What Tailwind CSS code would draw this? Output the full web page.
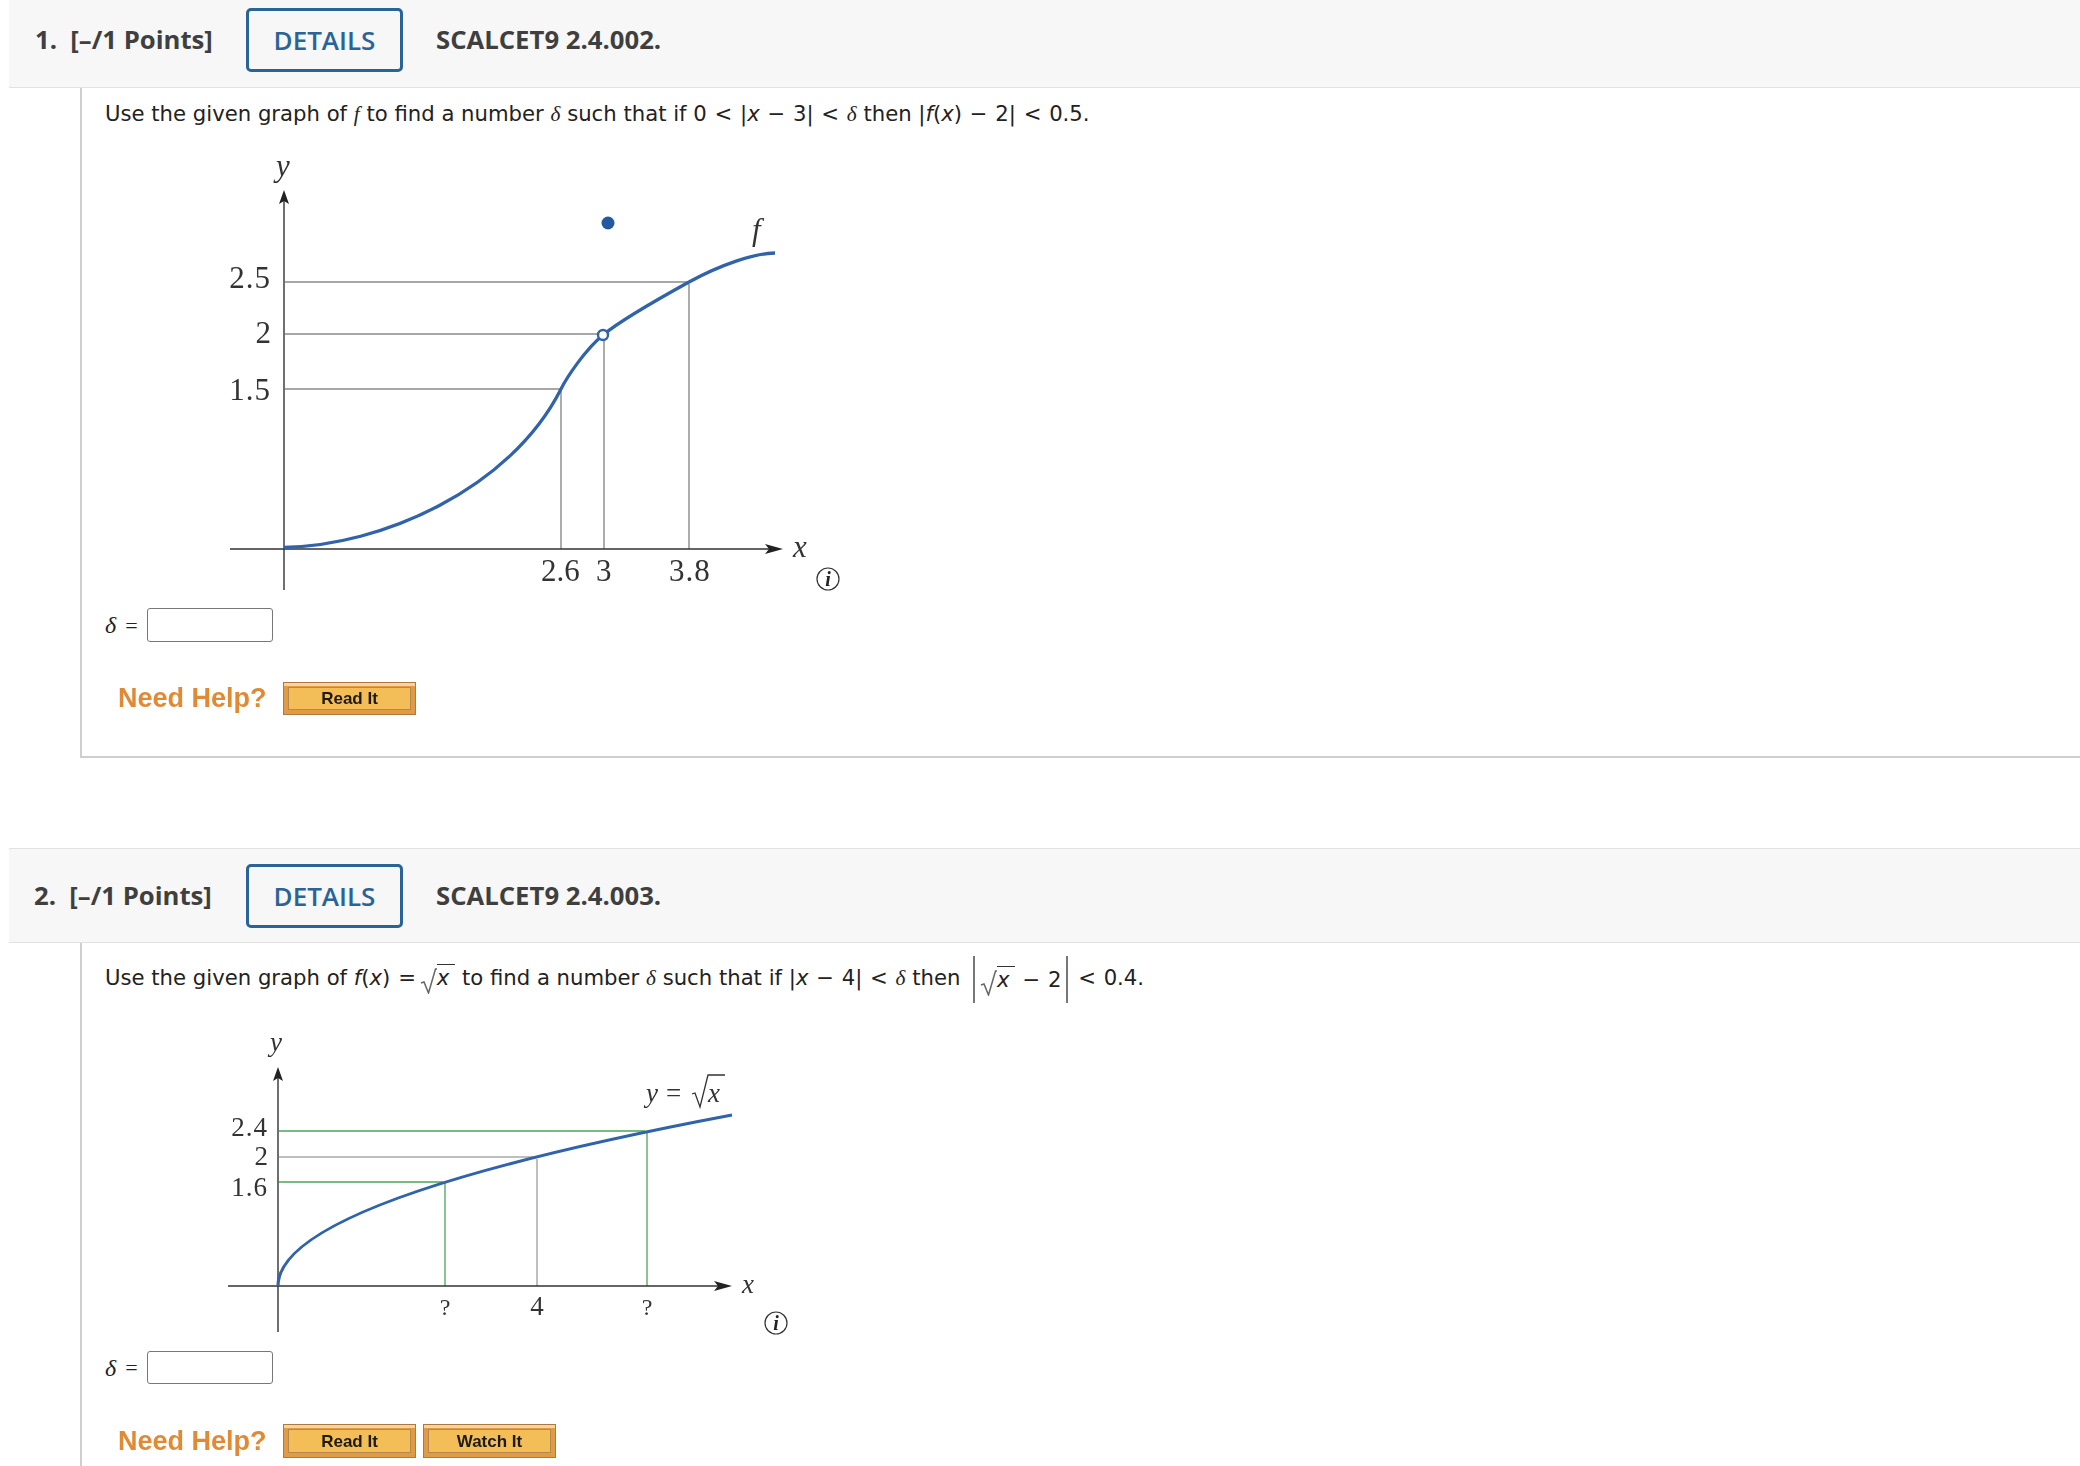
<!DOCTYPE html>
<html lang="en">
<head>
  <meta charset="UTF-8" />
  <title>SCALCET9 2.4</title>
  <script src="https://cdn.jsdelivr.net/npm/@tailwindcss/browser@4"></script>
</head>
<body class="h-[1466px] overflow-hidden bg-white font-['Open_Sans',sans-serif] text-[#222]">

  <!-- question 1 -->
  <div class="ml-[9px] flex h-[88px] items-center border-b border-[#e2e2e2] bg-[#f7f7f7] pb-[7px] text-[25.700px] font-bold text-[#3f3f3f]">
    <span class="ml-[26px] w-[211px] whitespace-pre">1.  [–/1 Points]</span>
    <span class="flex h-[64px] w-[157px] items-center justify-center rounded-[5px] border-[3px] border-[#2a6496] text-[26px] font-semibold text-[#2a6496]">DETAILS</span>
    <span class="ml-[33px]">SCALCET9 2.4.002.</span>
  </div>
  <div class="ml-[80px] h-[670px] border-b-2 border-l-2 border-[#cfcfcf]">
    <p class="h-[52px] pl-[23px] font-['DejaVu_Sans',sans-serif] text-[21.200px] leading-[52px] whitespace-pre">Use the given graph of <i class="font-['Liberation_Serif',serif]">f</i> to find a number <i class="font-['Liberation_Serif',serif]">δ</i> such that if 0 <span class="mx-[1px]">&lt;</span> |<i>x</i> <span class="mx-[1px]">−</span> 3| <span class="mx-[1px]">&lt;</span> <i class="font-['Liberation_Serif',serif]">δ</i> then |<i>f</i>(<i>x</i>) <span class="mx-[1px]">−</span> 2| <span class="mx-[1px]">&lt;</span> 0.5.</p>
    <svg class="ml-[118px] block h-[460px] w-[660px] blur-[0.4px]" viewBox="200 140 660 460" fill="none" font-family="Liberation Serif, serif" font-size="31">
      <g stroke="#8a8a8a" stroke-width="1.4">
        <path d="M285 282H688M285 334H600M285 389H560M561 391V549M604 340V549M689 284V549" />
      </g>
      <g stroke="#333" stroke-width="1.4">
        <path d="M284 195V590M230 549H775" />
      </g>
      <path d="M284 190l-5 14 5-3 5 3zM783 549l-18-5 4 5-4 5z" fill="#222" />
      <path d="M284 547.300C380 546 510 490 561 389C567 377 585 350 603 335C618 322.500 660 298 689 282C720 265 755 253 775 253" stroke="#3063a9" stroke-width="3.300" />
      <circle cx="608" cy="223" r="6.500" fill="#23599f" />
      <circle cx="603" cy="335" r="5" fill="#fff" stroke="#3063a9" stroke-width="2.400" />
      <g fill="#333">
        <text x="271" y="288" text-anchor="end" letter-spacing="1">2.5</text>
        <text x="271" y="343" text-anchor="end">2</text>
        <text x="271" y="400" text-anchor="end" letter-spacing="1">1.5</text>
        <text x="541" y="581">2.6</text>
        <text x="596" y="581">3</text>
        <text x="669" y="581" letter-spacing="1">3.8</text>
        <text x="276" y="176" font-style="italic">y</text>
        <text x="752" y="240" font-style="italic">f</text>
        <text x="793" y="557" font-style="italic">x</text>
      </g>
      <circle cx="828" cy="579" r="11" stroke="#333" stroke-width="1.200" />
      <text x="828" y="586" text-anchor="middle" font-size="20" font-weight="700" font-style="italic" fill="#222">i</text>
    </svg>
    <div class="mt-[8px] flex h-[34px] items-center pl-[23px] text-[22px]">
      <i class="font-['Liberation_Serif',serif] text-[24px]">δ</i><span class="ml-[9px] font-['Liberation_Serif',serif]">=</span>
      <div class="ml-[9px] h-[34px] w-[126px] rounded-[3px] border border-[#777]"></div>
    </div>
    <div class="mt-[36px] ml-[36px] flex items-center font-['Liberation_Sans',sans-serif] blur-[0.3px]">
      <span class="w-[165px] text-[27px] font-bold text-[#e08a35]">Need Help?</span>
      <div class="h-[33px] w-[133px] border border-[#ad7a3e] bg-[#e39a45] p-[4px] shadow-[inset_0_3px_0_#f5d3a5]">
        <div class="flex h-full items-center justify-center border border-[#b48a4c] bg-[#f3bd58] text-[17px] font-bold text-[#1d1a14]">Read It</div>
      </div>
    </div>
  </div>

  <!-- question 2 -->
  <div class="mt-[90px] ml-[9px] flex h-[95px] items-center border-y border-[#e2e2e2] bg-[#f7f7f7] pt-[1px] text-[25.700px] font-bold text-[#3f3f3f]">
    <span class="ml-[25px] w-[212px] whitespace-pre">2.  [–/1 Points]</span>
    <span class="flex h-[64px] w-[157px] items-center justify-center rounded-[5px] border-[3px] border-[#2a6496] text-[26px] font-semibold text-[#2a6496]">DETAILS</span>
    <span class="ml-[33px]">SCALCET9 2.4.003.</span>
  </div>
  <div class="ml-[80px] h-[523px] border-l-2 border-[#cfcfcf]">
    <p class="h-[70px] pl-[23px] font-['DejaVu_Sans',sans-serif] text-[21.200px] leading-[70px] whitespace-pre">Use the given graph of <i>f</i>(<i>x</i>) <span class="mr-[-3px] ml-[1px]">=</span> <svg class="inline-block h-[26px] w-[17px] align-[-9px]" viewBox="0 0 17 26" fill="none" stroke="#666" stroke-width="1.500"><path d="M1 15l3-1 4.500 11L15.500 1H17" /></svg><i class="border-t border-[#333] pr-[6px]">x</i> to find a number <i class="font-['Liberation_Serif',serif]">δ</i> such that if |<i>x</i> <span class="mx-[1px]">−</span> 4| <span class="mx-[1px]">&lt;</span> <i class="font-['Liberation_Serif',serif]">δ</i> then <span class="mr-[2px] ml-[6px] inline-block h-[47px] border-x-2 border-[#777] px-[5px] align-middle leading-[47px]"><svg class="inline-block h-[26px] w-[17px] align-[-9px]" viewBox="0 0 17 26" fill="none" stroke="#666" stroke-width="1.500"><path d="M1 15l3-1 4.500 11L15.500 1H17" /></svg><i class="border-t border-[#333] pr-[5px]">x</i> <span class="mx-[1px]">−</span> 2</span> <span class="mx-[1px]">&lt;</span> 0.4.</p>
    <svg class="mt-[7px] ml-[118px] block h-[325px] w-[620px] blur-[0.4px]" viewBox="200 1020 620 325" fill="none" font-family="Liberation Serif, serif" font-size="27">
      <path d="M279 1131H645M445 1182V1286M279 1182H443M647 1133V1286" stroke="#4aa65a" stroke-width="1.300" />
      <path d="M279 1157H535M537 1159V1286" stroke="#a9a9a9" stroke-width="1.500" />
      <path d="M278 1072V1332M228 1286H725" stroke="#333" stroke-width="1.400" />
      <path d="M278 1067l-5 14 5-3 5 3zM732 1286l-18-5 4 5-4 5z" fill="#222" />
      <path d="M278 1286Q278 1200.500 732 1115" stroke="#3063a9" stroke-width="3.200" />
      <g fill="#333">
        <text x="268" y="1136" text-anchor="end" letter-spacing="1">2.4</text>
        <text x="268" y="1165" text-anchor="end">2</text>
        <text x="268" y="1196" text-anchor="end" letter-spacing="1">1.6</text>
        <text x="445" y="1315" text-anchor="middle" font-size="24">?</text>
        <text x="537" y="1315" text-anchor="middle">4</text>
        <text x="647" y="1315" text-anchor="middle" font-size="24">?</text>
        <text x="270" y="1051" font-style="italic">y</text>
        <text x="742" y="1293" font-style="italic">x</text>
        <text x="646" y="1102" font-style="italic">y</text>
        <text x="666" y="1102">=</text>
        <text x="708" y="1102" font-style="italic">x</text>
      </g>
      <path d="M692 1094l3-1 5 14 8-32H725" stroke="#333" stroke-width="1.300" />
      <circle cx="776" cy="1323" r="11" stroke="#333" stroke-width="1.200" />
      <text x="776" y="1330" text-anchor="middle" font-size="20" font-weight="700" font-style="italic" fill="#222">i</text>
    </svg>
    <div class="mt-[6px] flex h-[33px] items-center pl-[23px] text-[22px]">
      <i class="font-['Liberation_Serif',serif] text-[24px]">δ</i><span class="ml-[9px] font-['Liberation_Serif',serif]">=</span>
      <div class="ml-[9px] h-[33px] w-[126px] rounded-[3px] border border-[#777]"></div>
    </div>
    <div class="mt-[37px] ml-[36px] flex items-center font-['Liberation_Sans',sans-serif] blur-[0.3px]">
      <span class="w-[165px] text-[27px] font-bold text-[#e08a35]">Need Help?</span>
      <div class="h-[34px] w-[133px] border border-[#ad7a3e] bg-[#e39a45] p-[4px] shadow-[inset_0_3px_0_#f5d3a5]">
        <div class="flex h-full items-center justify-center border border-[#b48a4c] bg-[#f3bd58] text-[17px] font-bold text-[#1d1a14]">Read It</div>
      </div>
      <div class="ml-[7px] h-[34px] w-[133px] border border-[#ad7a3e] bg-[#e39a45] p-[4px] shadow-[inset_0_3px_0_#f5d3a5]">
        <div class="flex h-full items-center justify-center border border-[#b48a4c] bg-[#f3bd58] text-[17px] font-bold text-[#1d1a14]">Watch It</div>
      </div>
    </div>
  </div>

</body>
</html>
